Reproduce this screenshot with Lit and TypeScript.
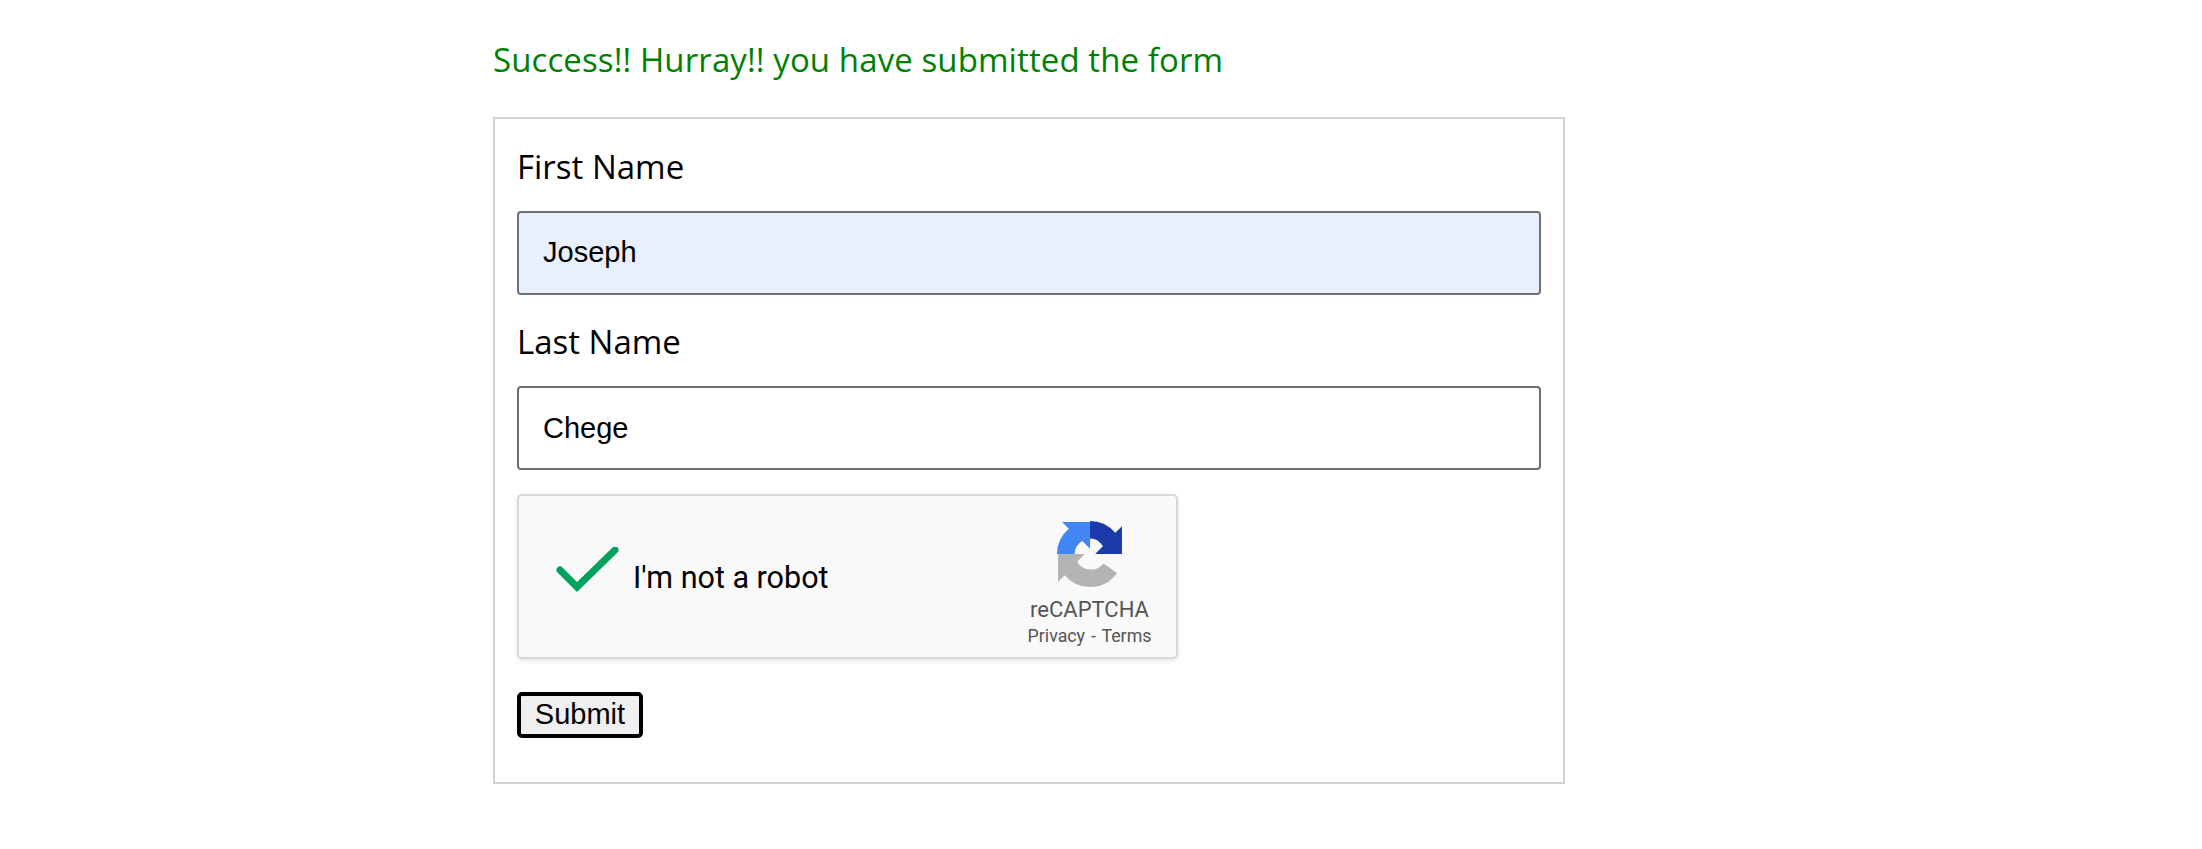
import { LitElement, html, css } from "lit";
import { customElement } from "lit/decorators.js";

const ARROW =
  "M0 32 A32 32 0 0 1 11.5 7.5 L5 1 H32 V27 L24.5 19.5 A15 15 0 0 0 17 32 Z";

@customElement("app-root")
export class AppRoot extends LitElement {
  static styles = css`
    :host {
      display: block;
      box-sizing: border-box;
      padding: 39px 0 0 493px;
      background: #fff;
      min-height: 849px;
    }
    .success {
      margin: 0 0 36px;
      height: 42px;
      line-height: 42px;
      font-family: "Open Sans", "Noto Sans", sans-serif;
      font-size: 33px;
      letter-spacing: 0.1px;
      color: #008000;
    }
    form {
      box-sizing: border-box;
      width: 1072px;
      height: 667px;
      border: 2px solid #d3d3d3;
      padding: 24px 22px 0;
      display: flex;
      flex-direction: column;
      align-items: flex-start;
    }
    label {
      height: 46px;
      line-height: 48px;
      font-family: "Open Sans", "Noto Sans", sans-serif;
      font-size: 33px;
      color: #000;
      margin-bottom: 22px;
    }
    input {
      box-sizing: border-box;
      width: 1024px;
      height: 84px;
      border: 2px solid #707070;
      border-radius: 4px;
      padding: 0 24px;
      font-family: "Liberation Sans", Arial, sans-serif;
      font-size: 29px;
      color: #000;
      background: #fff;
      outline: none;
      margin-bottom: 23px;
    }
    input.filled {
      background: #e8f0fe;
      padding-bottom: 1px;
    }
    .captcha {
      box-sizing: border-box;
      width: 661px;
      height: 165px;
      margin-top: 1px;
      border: 2px solid #d8d8d8;
      border-radius: 5px;
      background: #f9f9f9;
      box-shadow: 0 2px 4px rgba(0, 0, 0, 0.1);
      display: flex;
      align-items: stretch;
      justify-content: space-between;
      padding-right: 24px;
    }
    .left {
      display: flex;
      align-items: center;
      padding-left: 36px;
      gap: 12px;
    }
    .check {
      width: 66px;
      height: 50px;
      display: block;
      margin-top: -10px;
    }
    .robot {
      font-family: Roboto, sans-serif;
      font-size: 30.5px;
      color: #000;
      padding-top: 1px;
    }
    .brand {
      display: flex;
      flex-direction: column;
      align-items: center;
      width: 125px;
      padding-top: 25px;
      font-family: Roboto, sans-serif;
      color: #555;
    }
    .logo {
      width: 66px;
      height: 66px;
      display: block;
    }
    .name {
      font-size: 22px;
      line-height: 26px;
      margin-top: 10px;
      white-space: nowrap;
    }
    .links {
      font-size: 17.8px;
      line-height: 24px;
      margin-top: 1px;
      white-space: nowrap;
      word-spacing: 1.5px;
      color: #555;
    }
    button {
      box-sizing: border-box;
      width: 126px;
      height: 46px;
      margin-top: 33px;
      padding: 0 0 2px;
      border: 4px solid #000;
      border-radius: 5px;
      background: #efefef;
      font-family: "Liberation Sans", Arial, sans-serif;
      font-size: 29px;
      color: #000;
    }
  `;

  render() {
    return html`
      <p class="success">Success!! Hurray!! you have submitted the form</p>
      <form @submit=${(e: Event) => e.preventDefault()}>
        <label for="first">First Name</label>
        <input id="first" class="filled" type="text" .value=${"Joseph"} />
        <label for="last">Last Name</label>
        <input id="last" type="text" .value=${"Chege"} />
        <div class="captcha">
          <div class="left">
            <svg class="check" viewBox="0 0 66 50">
              <path
                d="M5 23 L22 40 L60 3"
                fill="none"
                stroke="#00a15d"
                stroke-width="7"
                stroke-linejoin="miter"
                stroke-linecap="round"
              />
            </svg>
            <span class="robot">I'm not a robot</span>
          </div>
          <div class="brand">
            <svg class="logo" viewBox="0 0 64 64">
              <path
                fill="#b3b3b3"
                d="M32 64 A32 32 0 0 0 58.2 50.4 L45.1 41.2 A15 15 0 0 1 32 47 Z"
              />
              <path fill="#b3b3b3" transform="rotate(-90 32 32)" d=${ARROW} />
              <path fill="#1c3aa9" transform="rotate(90 32 32)" d=${ARROW} />
              <path fill="#4285f4" d=${ARROW} />
            </svg>
            <div class="name">reCAPTCHA</div>
            <div class="links">Privacy - Terms</div>
          </div>
        </div>
        <button type="submit">Submit</button>
      </form>
    `;
  }
}
